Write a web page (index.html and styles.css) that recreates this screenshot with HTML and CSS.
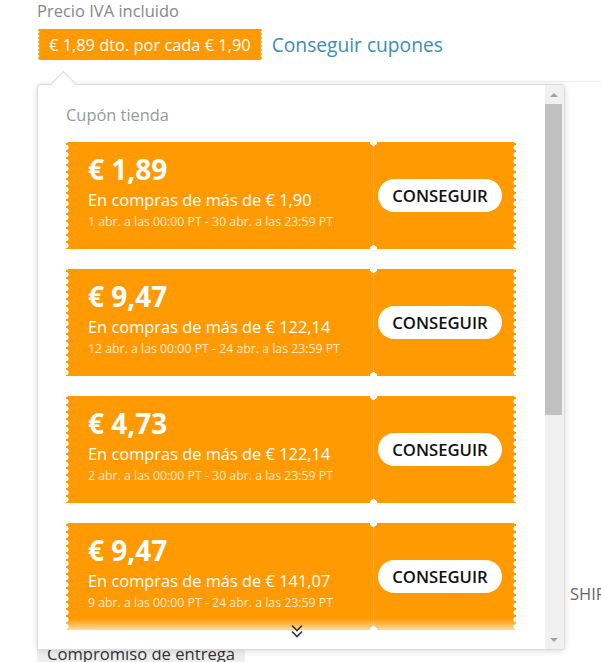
FILE: index.html
```html
<!DOCTYPE html>
<html lang="es">
<head>
    <meta charset="UTF-8">
    <meta name="viewport" content="width=device-width, initial-scale=1.0">
    <title>Cupones</title>
    <link rel="stylesheet" href="styles.css">
</head>
<body>
    <div class="page">
        <div class="price-label">Precio IVA incluido</div>
        <div class="promo-row">
            <span class="promo-badge">€ 1,89 dto. por cada € 1,90</span>
            <a class="promo-link" href="#">Conseguir cupones</a>
        </div>
        <div class="divider"></div>
        <div class="ship-row">SHIPPING</div>
        <div class="delivery">Compromiso de entrega</div>

        <div class="coupon-popup">
            <div class="coupon-list">
                <div class="coupon-title">Cupón tienda</div>

                <div class="coupon">
                    <div class="coupon-info">
                        <div class="coupon-amount">€ 1,89</div>
                        <div class="coupon-min">En compras de más de € 1,90</div>
                        <div class="coupon-date">1 abr. a las 00:00 PT - 30 abr. a las 23:59 PT</div>
                    </div>
                    <div class="coupon-action"><button class="coupon-btn">CONSEGUIR</button></div>
                </div>

                <div class="coupon">
                    <div class="coupon-info">
                        <div class="coupon-amount">€ 9,47</div>
                        <div class="coupon-min">En compras de más de € 122,14</div>
                        <div class="coupon-date">12 abr. a las 00:00 PT - 24 abr. a las 23:59 PT</div>
                    </div>
                    <div class="coupon-action"><button class="coupon-btn">CONSEGUIR</button></div>
                </div>

                <div class="coupon">
                    <div class="coupon-info">
                        <div class="coupon-amount">€ 4,73</div>
                        <div class="coupon-min">En compras de más de € 122,14</div>
                        <div class="coupon-date">2 abr. a las 00:00 PT - 30 abr. a las 23:59 PT</div>
                    </div>
                    <div class="coupon-action"><button class="coupon-btn">CONSEGUIR</button></div>
                </div>

                <div class="coupon">
                    <div class="coupon-info">
                        <div class="coupon-amount">€ 9,47</div>
                        <div class="coupon-min">En compras de más de € 141,07</div>
                        <div class="coupon-date">9 abr. a las 00:00 PT - 24 abr. a las 23:59 PT</div>
                    </div>
                    <div class="coupon-action"><button class="coupon-btn">CONSEGUIR</button></div>
                </div>

                <div class="coupon">
                    <div class="coupon-info">
                        <div class="coupon-amount">€ 14,20</div>
                        <div class="coupon-min">En compras de más de € 188,09</div>
                        <div class="coupon-date">9 abr. a las 00:00 PT - 24 abr. a las 23:59 PT</div>
                    </div>
                    <div class="coupon-action"><button class="coupon-btn">CONSEGUIR</button></div>
                </div>
            </div>

            <div class="scroll-hint">
                <svg class="scroll-hint-icon" width="12" height="14" viewBox="0 0 12 14">
                    <polyline points="1,1.5 6,6.5 11,1.5" fill="none" stroke="#333" stroke-width="1.6"/>
                    <polyline points="1,7.5 6,12.5 11,7.5" fill="none" stroke="#333" stroke-width="1.6"/>
                </svg>
            </div>

            <div class="fake-scrollbar">
                <span class="scroll-arrow"><span class="arrow-up"></span></span>
                <span class="scroll-thumb"></span>
                <span class="scroll-track"></span>
                <span class="scroll-arrow"><span class="arrow-down"></span></span>
            </div>
        </div>
    </div>
</body>
</html>
```

FILE: styles.css
```css
html, body {
    overflow: hidden;
}
body {
    margin: 0;
    padding: 0;
    font-family: "Open Sans", "Liberation Sans", sans-serif;
    background-color: #fff;
    color: #333;
}
.page {
    position: relative;
    padding-left: 37px;
}
.price-label {
    font-size: 16.5px;
    line-height: 22px;
    color: #888;
}
.promo-row {
    display: flex;
    align-items: center;
    margin-top: 7px;
}
.promo-badge {
    position: relative;
    display: inline-block;
    background-color: #ff9900;
    color: #fff;
    font-size: 16.4px;
    line-height: 31px;
    padding: 0 11px;
    margin-left: 1px;
}
.promo-badge::before,
.promo-badge::after {
    content: "";
    position: absolute;
    top: 0;
    bottom: 0;
    width: 4px;
    background: radial-gradient(circle at 2px 2px, #fff 1.2px, transparent 1.7px) 0 1px / 4px 4px repeat-y;
}
.promo-badge::before {
    left: -2px;
}
.promo-badge::after {
    right: -2px;
}
.promo-link {
    margin-left: 10px;
    font-size: 19.2px;
    color: #3b8db3;
    text-decoration: none;
}
.divider {
    margin-top: 21px;
    margin-left: 243px;
    height: 1px;
    background-color: #eee;
}
.ship-row {
    margin-top: 501px;
    margin-left: 533px;
    font-size: 16.5px;
    line-height: 22px;
    color: #666;
    white-space: nowrap;
}
.delivery {
    display: inline-block;
    margin-top: 38px;
    padding: 0 10px;
    font-size: 16.6px;
    line-height: 22px;
    color: #333;
    background-color: #eee;
}

/* coupon dropdown */
.coupon-popup {
    position: absolute;
    left: 37px;
    top: 84px;
    width: 528px;
    height: 566px;
    box-sizing: border-box;
    background-color: #fff;
    border: 1px solid #dcdcdc;
    border-radius: 4px;
    box-shadow: 0 1px 6px rgba(0, 0, 0, 0.15);
}
.coupon-popup::before {
    content: "";
    position: absolute;
    top: -10px;
    left: 16px;
    width: 18px;
    height: 18px;
    background-color: #fff;
    border-left: 1px solid #dcdcdc;
    border-top: 1px solid #dcdcdc;
    transform: rotate(45deg);
}
.coupon-list {
    height: 100%;
    overflow: hidden;
    padding: 20px 19px 0 28px;
    box-sizing: border-box;
}
.coupon-title {
    font-size: 16.4px;
    line-height: 20px;
    color: #999;
    margin-bottom: 17px;
}
.coupon {
    position: relative;
    display: flex;
    width: 450px;
    height: 107px;
    margin-bottom: 20px;
    background-color: #ff9a03;
}
.coupon::before,
.coupon::after {
    content: "";
    position: absolute;
    top: 0;
    bottom: 0;
    width: 6px;
    background: radial-gradient(circle at 3px 3.5px, #fff 2.3px, transparent 2.9px) 0 2px / 6px 7px repeat-y;
}
.coupon::before {
    left: -3px;
}
.coupon::after {
    right: -3px;
}
.coupon-info {
    width: 307px;
    padding: 10px 0 0 22px;
    box-sizing: border-box;
    color: #fff;
}
.coupon-amount {
    font-size: 28px;
    font-weight: 700;
    line-height: 34px;
}
.coupon-min {
    margin-top: 3px;
    font-size: 16.4px;
    line-height: 22px;
}
.coupon-date {
    margin-top: 3px;
    font-size: 12.3px;
    line-height: 16px;
    color: rgba(255, 255, 255, 0.82);
}
.coupon-action {
    position: relative;
    flex: 1;
    display: flex;
    align-items: center;
    padding-left: 5px;
}
.coupon-action::before {
    content: "";
    position: absolute;
    top: 0;
    bottom: 0;
    left: -4px;
    width: 9px;
    background:
        radial-gradient(circle at 50% 0, #fff 3.5px, transparent 4px) top center / 9px 9px no-repeat,
        radial-gradient(circle at 50% 100%, #fff 3.5px, transparent 4px) bottom center / 9px 9px no-repeat,
        linear-gradient(rgba(255, 255, 255, 0.2), rgba(255, 255, 255, 0.2)) center / 1px 100% no-repeat;
}
.coupon-btn {
    width: 124px;
    height: 33px;
    border: none;
    border-radius: 17px;
    background-color: #fff;
    color: #111;
    font-family: "Open Sans", "Liberation Sans", sans-serif;
    font-size: 16.7px;
    font-weight: 600;
    padding: 0;
    cursor: pointer;
}

/* bottom fade with "more" chevron */
.scroll-hint {
    position: absolute;
    left: 0;
    right: 19px;
    bottom: 0;
    height: 18px;
    display: flex;
    background-color: #fff;
}
.scroll-hint::before {
    content: "";
    position: absolute;
    left: 0;
    right: 0;
    top: -12px;
    height: 12px;
    background: linear-gradient(rgba(255, 255, 255, 0), rgba(255, 255, 255, 0.7));
}
.scroll-hint-icon {
    position: relative;
    margin: -7px 0 0 253px;
}

/* scrollbar drawn by hand */
.fake-scrollbar {
    position: absolute;
    top: 0;
    right: 0;
    bottom: 0;
    width: 19px;
    display: flex;
    flex-direction: column;
    background-color: #f1f1f1;
    border-radius: 0 4px 4px 0;
}
.scroll-arrow {
    height: 19px;
    display: flex;
    align-items: center;
    justify-content: center;
    padding-right: 2px;
}
.arrow-up {
    border-left: 4px solid transparent;
    border-right: 4px solid transparent;
    border-bottom: 4px solid #a3a3a3;
}
.arrow-down {
    border-left: 4px solid transparent;
    border-right: 4px solid transparent;
    border-top: 4px solid #a3a3a3;
}
.scroll-thumb {
    height: 311px;
    width: 17px;
    background-color: #c1c1c1;
}
.scroll-track {
    flex: 1;
}
```
